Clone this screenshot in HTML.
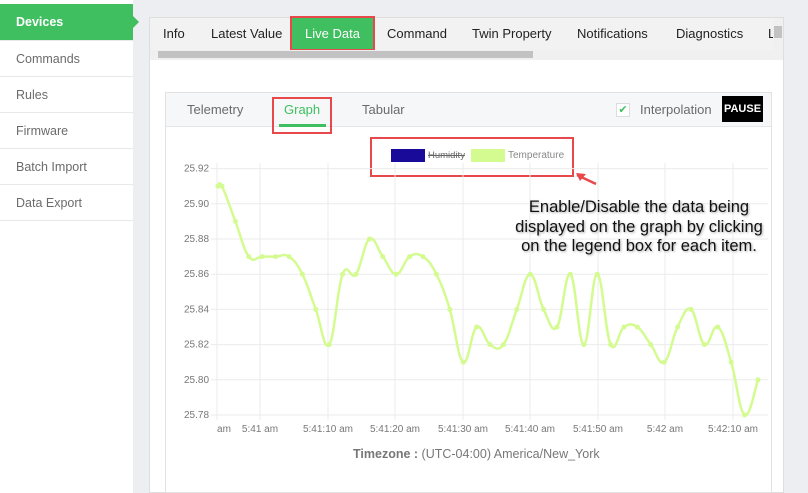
<!DOCTYPE html>
<html><head><meta charset="utf-8"><style>
*{box-sizing:border-box;margin:0;padding:0}
body{width:808px;height:493px;overflow:hidden;background:#eceef2;font-family:"Liberation Sans",sans-serif;position:relative}
.side{position:absolute;left:0;top:0;width:133px;height:493px;background:#fff}
.side div{height:36px;border-bottom:1px solid #e8e8e8;font-size:12.5px;color:#6b6b6b;padding-left:16px;line-height:36px}
.side .act{background:#3fbf5f;color:#fff;font-weight:bold;position:relative;margin-top:4px;height:37px}
.side .act:after{content:"";position:absolute;right:-6px;top:12px;border-left:6px solid #3fbf5f;border-top:6px solid transparent;border-bottom:6px solid transparent}
.panel{position:absolute;left:149px;top:17px;width:635px;height:476px;background:#fff;border:1px solid #dedede}
.tabs{height:32px;background:#f2f2f2;position:relative;font-size:13px;color:#222}
.tabs span{position:absolute;top:8px}
.live{position:absolute;left:142px;top:0;width:81px;height:31px;background:#3fbf5f;color:#fff;text-align:center;line-height:31px;outline:2px solid #e8474b;outline-offset:0}
.sb{position:absolute;left:0;top:32px;width:624px;height:10px;background:#f0f0f0}
.sb i{position:absolute;left:8px;top:1px;width:375px;height:7px;background:#c2c2c2}
.card{position:absolute;left:165px;top:92px;width:607px;height:401px;border:1px solid #e2e2e2;background:#fff}
.ch{height:34px;background:#f6f7f9;border-bottom:1px solid #e6e6e6;position:relative;font-size:13px;color:#6b6b6b}
.ch span{position:absolute;top:9px}
.red{position:absolute;border:2px solid #e8474b}
</style></head><body>
<div class="side">
<div class="act">Devices</div><div>Commands</div><div>Rules</div><div>Firmware</div><div>Batch Import</div><div>Data Export</div>
</div>
<div class="panel">
<div class="tabs">
<span style="left:13px">Info</span><span style="left:61px">Latest Value</span>
<div class="live">Live Data</div>
<span style="left:237px">Command</span><span style="left:322px">Twin Property</span><span style="left:427px">Notifications</span><span style="left:526px">Diagnostics</span><span style="left:618px">Li</span>
<div style="position:absolute;right:0;top:0;width:10px;height:42px;background:#f0f0f0"><div style="margin:8px 1px;height:12px;background:#c2c2c2"></div></div>
</div>
<div class="sb"><i></i></div>
</div>
<div class="card">
<div class="ch">
<span style="left:21px">Telemetry</span>
<span style="left:118px;color:#3fbf5f">Graph</span>
<div style="position:absolute;left:113px;top:31px;width:47px;height:3px;background:#3fbf5f"></div>
<span style="left:196px">Tabular</span>
<div style="position:absolute;left:450px;top:10px;width:14px;height:14px;background:#fff;border:1px solid #ddd;color:#3fbf5f;font-size:11px;line-height:12px;text-align:center">✔</div>
<span style="left:474px">Interpolation</span>
<div style="position:absolute;left:556px;top:3px;width:41px;height:26px;background:#000;color:#fff;font-weight:bold;font-size:11px;line-height:26px;text-align:center">PAUSE</div>
</div>
</div>
<div class="red" style="left:272px;top:97px;width:60px;height:37px"></div>
<div class="red" style="left:370px;top:137px;width:204px;height:40px"></div>
<div style="position:absolute;left:391px;top:149px;width:34px;height:13px;background:#1a0a9a"></div>
<div style="position:absolute;left:428px;top:150px;font-size:9.5px;color:#666;text-decoration:line-through">Humidity</div>
<div style="position:absolute;left:471px;top:149px;width:34px;height:13px;background:#d4fb90"></div>
<div style="position:absolute;left:508px;top:150px;font-size:10px;color:#888">Temperature</div>
<svg style="position:absolute;left:0;top:0" width="808" height="493">
<g stroke="#ebebeb" stroke-width="1" id="grid"></g>
<g font-size="10" fill="#777" font-family="Liberation Sans" id="lab"></g>
<path id="ln" fill="none" stroke="#d4fb90" stroke-width="2.5"/>
<g id="pts" fill="#d4fb90"></g>
<path d="M577 175 L596 184" stroke="#e8474b" stroke-width="2.5"/>
<path d="M576 173 L586 174 L580 181 Z" fill="#e8474b"/>
</svg>
<div style="position:absolute;left:484px;top:198px;width:310px;text-align:center;font-size:16.5px;line-height:19.5px;color:#111;text-shadow:1px 1px 2px #aaa">Enable/Disable the data being<br>displayed on the graph by clicking<br>on the legend box for each item.</div>
<div style="position:absolute;left:353px;top:447px;font-size:12.5px;color:#777"><b>Timezone :</b> (UTC-04:00) America/New_York</div>
<script>
var g=document.getElementById('grid'),l=document.getElementById('lab'),s='',t='';
var y0=168.6,dy=35.2;
for(var i=0;i<8;i++){var y=y0+i*dy;s+='<line x1="211" x2="768" y1="'+y+'" y2="'+y+'"/>';t+='<text x="184" y="'+(y+3)+'">'+(25.92-i*0.02).toFixed(2)+'</text>';}
var xs=[217,260,328,395,463,530,598,665,733],lb=['am','5:41 am','5:41:10 am','5:41:20 am','5:41:30 am','5:41:40 am','5:41:50 am','5:42 am','5:42:10 am'];
for(var i=0;i<xs.length;i++){s+='<line y1="163" y2="420" x1="'+xs[i]+'" x2="'+xs[i]+'"/>';t+='<text text-anchor="middle" x="'+(i==0?224:xs[i])+'" y="432">'+lb[i]+'</text>';}
g.innerHTML=s;l.innerHTML=t;
var v=[.91,.91,.89,.87,.87,.87,.87,.86,.84,.82,.86,.86,.88,.87,.86,.87,.87,.86,.84,.81,.83,.82,.82,.84,.86,.84,.83,.86,.82,.86,.82,.83,.83,.82,.81,.83,.84,.82,.83,.81,.78,.80];
var P=v.map(function(a,i){return [i==0?218:222+(i-1)*13.4, y0+(0.92-a)/0.02*dy];});
var d='M'+P[0][0]+' '+P[0][1];
for(var i=0;i<P.length-1;i++){var p0=P[i-1]||P[i],p1=P[i],p2=P[i+1],p3=P[i+2]||p2,k=0.2;
d+=' C'+(p1[0]+(p2[0]-p0[0])*k)+' '+(p1[1]+(p2[1]-p0[1])*k)+' '+(p2[0]-(p3[0]-p1[0])*k)+' '+(p2[1]-(p3[1]-p1[1])*k)+' '+p2[0]+' '+p2[1];}
document.getElementById('ln').setAttribute('d',d);
document.getElementById('pts').innerHTML=P.map(function(p){return '<circle cx="'+p[0]+'" cy="'+p[1]+'" r="2.5"/>'}).join('');
</script>
</body></html>
